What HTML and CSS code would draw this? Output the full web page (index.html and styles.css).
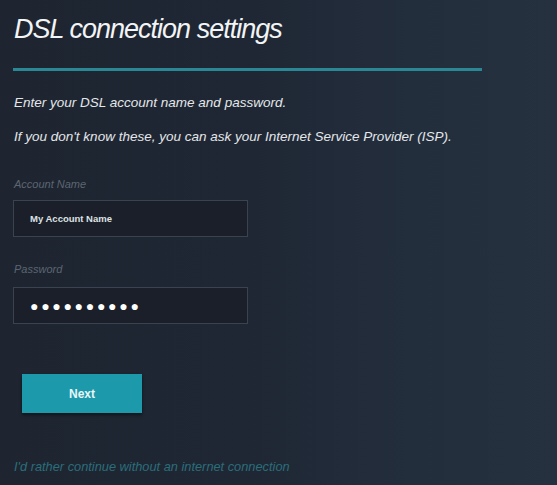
FILE: index.html
```html
<!DOCTYPE html>
<html>
<head>
<meta charset="utf-8">
<link rel="stylesheet" href="styles.css">
</head>
<body>
<div class="page">
  <h1 class="title">DSL connection settings</h1>
  <div class="rule"></div>
  <p class="intro">Enter your DSL account name and password.</p>
  <p class="intro second">If you don't know these, you can ask your Internet Service Provider (ISP).</p>
  <div class="field">
    <div class="label">Account Name</div>
    <div class="input"><span class="value">My Account Name</span></div>
  </div>
  <div class="field">
    <div class="label">Password</div>
    <div class="input"><span class="dots">●●●●●●●●●●</span></div>
  </div>
  <div class="button">Next</div>
  <div class="link">I'd rather continue without an internet connection</div>
</div>
</body>
</html>
```
FILE: styles.css
```css
html, body {
  margin: 0;
  padding: 0;
  height: 100%;
}
body {
  background: linear-gradient(90deg, #1e2531 0%, #1f2734 45%, #232e3d 75%, #25313f 100%);
  font-family: "Liberation Sans", Arial, sans-serif;
  color: #e6e9ec;
  overflow: hidden;
}
.page {
  padding: 13px 0 0 14px;
  display: flex;
  flex-direction: column;
  align-items: flex-start;
}
.title {
  margin: 0;
  font-size: 27px;
  font-weight: normal;
  font-style: italic;
  letter-spacing: -1px;
  line-height: 32px;
  color: #f2f4f5;
}
.rule {
  margin: 23px 0 0 -1px;
  width: 469px;
  height: 3px;
  background: #2a8796;
}
.intro {
  margin: 24px 0 0 0;
  font-size: 13.5px;
  font-style: italic;
  line-height: 16px;
  color: #e4e7ea;
}
.intro.second {
  margin-top: 18px;
}
.field {
  display: flex;
  flex-direction: column;
  align-items: flex-start;
}
.field + .field {
  margin-top: 26px;
}
.label {
  margin-top: 33px;
  font-size: 11px;
  font-style: italic;
  color: #5c6570;
  line-height: 12px;
}
.field + .field .label {
  margin-top: 0;
}
.input {
  margin: 10px 0 0 -1px;
  border: 1px solid #3a4350;
  background: #1a1f29;
  display: flex;
  align-items: center;
  padding-left: 16px;
  box-sizing: border-box;
  width: 235px;
  height: 37px;
}
.field + .field .input {
  margin-top: 12px;
}
.value {
  font-size: 9.5px;
  font-weight: bold;
  color: #dfe2e5;
}
.dots {
  font-size: 14px;
  letter-spacing: 2.7px;
  color: #ffffff;
}
.button {
  margin: 50px 0 0 8px;
  width: 120px;
  height: 39px;
  background: #1c9aab;
  box-shadow: 0 2px 3px rgba(0,0,0,0.5);
  display: flex;
  align-items: center;
  justify-content: center;
  font-size: 12px;
  font-weight: bold;
  color: #e8f6f8;
}
.link {
  margin-top: 46px;
  font-size: 12.8px;
  font-style: italic;
  color: #2b6e7a;
}
```
